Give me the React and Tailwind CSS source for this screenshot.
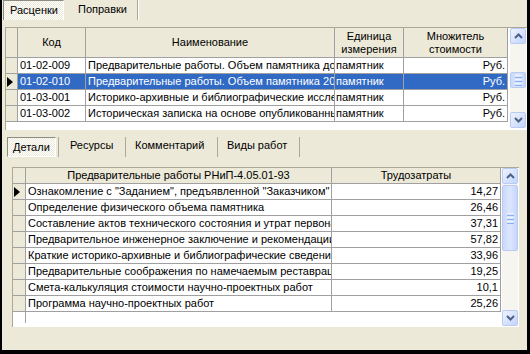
import React from "react";

const FONT = "font-['Liberation_Sans',Arial,sans-serif]";

function Chevron({ up }) {
  return (
    <svg width="9" height="6" viewBox="0 0 9 6">
      <path
        d={up ? "M1 5 L4.5 1.5 L8 5" : "M1 1 L4.5 4.5 L8 1"}
        fill="none"
        stroke="#4D6185"
        strokeWidth="2"
      />
    </svg>
  );
}

function SBtn({ up }) {
  return (
    <div className="h-[16px] w-[16px] shrink-0 rounded-[2px] border border-[#B9CBF3] bg-gradient-to-br from-[#EEF3FE] to-[#C3D5FC] flex items-center justify-center">
      <Chevron up={up} />
    </div>
  );
}

function Grip() {
  return (
    <div className="flex flex-col gap-[1px] items-center">
      <div className="w-[7px] h-[1px] bg-[#EEF4FE]" />
      <div className="w-[7px] h-[1px] bg-[#8CB0F8]" />
      <div className="w-[7px] h-[1px] bg-[#EEF4FE]" />
      <div className="w-[7px] h-[1px] bg-[#8CB0F8]" />
      <div className="w-[7px] h-[1px] bg-[#EEF4FE]" />
      <div className="w-[7px] h-[1px] bg-[#8CB0F8]" />
    </div>
  );
}

function Thumb({ cls }) {
  return (
    <div
      className={`w-[16px] shrink-0 rounded-[2px] border border-[#B9CBF3] bg-gradient-to-r from-[#CAD9FC] via-[#DCE6FD] to-[#C6D6FC] flex items-center justify-center ${cls}`}
    >
      <Grip />
    </div>
  );
}

function Indicator({ arrow }) {
  return (
    <div className="w-[12px] shrink-0 h-full bg-[#ECE9D8] border-r border-b border-[#A0A0A0] flex items-center justify-start pl-[1px]">
      {arrow && (
        <svg width="6" height="10" viewBox="0 0 6 10">
          <path d="M0 0 L6 5 L0 10 Z" fill="#000" />
        </svg>
      )}
    </div>
  );
}

const upperRows = [
  ["01-02-009", "Предварительные работы. Объем памятника до 2000 куб.м", "памятник", "Руб.", false],
  ["01-02-010", "Предварительные работы. Объем памятника 2001-5000 куб.м", "памятник", "Руб.", true],
  ["01-03-001", "Историко-архивные и библиографические исследования", "памятник", "Руб.", false],
  ["01-03-002", "Историческая записка на основе опубликованных материалов", "памятник", "Руб.", false],
];

const lowerRows = [
  ["Ознакомление с \"Заданием\", предъявленной \"Заказчиком\"", "14,27"],
  ["Определение физического объема памятника", "26,46"],
  ["Составление актов технического состояния и утрат первоначальных элементов", "37,31"],
  ["Предварительное инженерное заключение и рекомендации", "57,82"],
  ["Краткие историко-архивные и библиографические сведения", "33,96"],
  ["Предварительные соображения по намечаемым реставрационным работам", "19,25"],
  ["Смета-калькуляция стоимости научно-проектных работ", "10,1"],
  ["Программа научно-проектных работ", "25,26"],
];

const DITHER =
  "[background:repeating-conic-gradient(#ffffff_0%_25%,#ECE9D8_0%_50%)_0_0/2px_2px]";

export default function App() {
  return (
    <div className={`w-[530px] h-[354px] bg-black pl-[2px] pr-[3px] pb-[4px] ${FONT} text-[11px] text-black`}>
      <div className="h-full bg-[#ECE9D8] flex flex-col">
        {/* top tabs */}
        <div className="h-[20px] flex pl-[1px] shrink-0">
          <div className={`w-[61px] h-[20px] border-l border-t border-[#8E8C80] border-r-white border-r ${DITHER} pl-[6px] leading-[19px]`}>
            Расценки
          </div>
          <div className="w-[74px] h-[20px] border-r border-[#ACA899] pl-[14px] leading-[19px] shadow-[1px_0_0_#fff]">
            Поправки
          </div>
        </div>

        {/* upper grid */}
        <div className="mt-[7px] ml-[3px] h-[103px] shrink-0 bg-white border-t border-l border-[#ACA899] flex">
          <div className="w-[502px] shrink-0 flex flex-col">
            {/* header */}
            <div className="h-[30px] flex shrink-0 bg-[#ECE9D8]">
              <Indicator />
              <div className="w-[68px] shrink-0 border-r border-b border-[#A0A0A0] flex items-center justify-center leading-[13px]">Код</div>
              <div className="w-[249px] shrink-0 border-r border-b border-[#A0A0A0] flex items-center justify-center leading-[13px]">Наименование</div>
              <div className="w-[69px] shrink-0 border-r border-b border-[#A0A0A0] flex items-center justify-center text-center leading-[13px]">Единица<br />измерения</div>
              <div className="w-[104px] shrink-0 border-r border-b border-[#A0A0A0] flex items-center justify-center text-center leading-[13px]">Множитель<br />стоимости</div>
            </div>
            {upperRows.map(([code, name, unit, mult, sel], i) => {
              const c = sel ? "bg-[#316AC5] text-white" : "bg-white";
              return (
                <div key={i} className="h-[16px] flex shrink-0">
                  <Indicator arrow={sel} />
                  <div className={`w-[68px] shrink-0 border-r border-b border-[#A0A0A0] overflow-hidden whitespace-nowrap pl-[2px] leading-[15px] ${c}`}>{code}</div>
                  <div className={`w-[249px] shrink-0 border-r border-b border-[#A0A0A0] overflow-hidden whitespace-nowrap pl-[2px] leading-[15px] ${c}`}>{name}</div>
                  <div className={`w-[69px] shrink-0 border-r border-b border-[#A0A0A0] overflow-hidden whitespace-nowrap pl-[1px] leading-[15px] ${c}`}>{unit}</div>
                  <div className={`w-[104px] shrink-0 border-r border-b border-[#A0A0A0] overflow-hidden whitespace-nowrap pr-[2px] text-right leading-[15px] ${c}`}>{mult}</div>
                </div>
              );
            })}
          </div>
          <div className="ml-[2px] w-[16px] h-[100px] shrink-0 bg-[#F6F5F0] flex flex-col">
            <SBtn up />
            <div className="h-[28px] shrink-0" />
            <Thumb cls="h-[16px]" />
            <div className="flex-1" />
            <SBtn />
          </div>
        </div>

        {/* lower tabs */}
        <div className="mt-[7px] h-[20px] flex pl-[5px] shrink-0">
          <div className={`w-[49px] h-[20px] border-l border-t border-[#8E8C80] border-r border-b border-r-white border-b-white ${DITHER} pl-[5px] leading-[18px]`}>
            Детали
          </div>
          <div className="ml-[2px] w-[68px] h-[20px] border-l border-r border-[#ACA899] pl-[11px] leading-[17px]">
            Ресурсы
          </div>
          <div className="w-[92px] h-[20px] border-r border-[#ACA899] pl-[9px] leading-[17px]">
            Комментарий
          </div>
          <div className="w-[82px] h-[20px] border-r border-[#ACA899] pl-[9px] leading-[17px]">
            Виды работ
          </div>
        </div>

        {/* lower grid */}
        <div className="mt-[10px] ml-[10px] w-[507px] h-[160px] shrink-0 bg-white border-t border-l border-[#ACA899] flex">
          <div className="w-[488px] shrink-0 flex flex-col">
            <div className="h-[16px] flex shrink-0 bg-[#ECE9D8]">
              <div className="w-[13px] shrink-0 border-r border-b border-[#A0A0A0]" />
              <div className="w-[306px] shrink-0 border-r border-b border-[#A0A0A0] text-center leading-[15px] overflow-hidden whitespace-nowrap">Предварительные работы РНиП-4.05.01-93</div>
              <div className="w-[169px] shrink-0 border-r border-b border-[#A0A0A0] text-center leading-[15px]">Трудозатраты</div>
            </div>
            {lowerRows.map(([name, v], i) => (
              <div key={i} className="h-[16px] flex shrink-0">
                <div className="w-[13px] shrink-0 bg-[#ECE9D8] border-r border-b border-[#A0A0A0] flex items-center pl-[1px]">
                  {i === 0 && (
                    <svg width="6" height="10" viewBox="0 0 6 10">
                      <path d="M0 0 L6 5 L0 10 Z" fill="#000" />
                    </svg>
                  )}
                </div>
                <div className="w-[306px] shrink-0 border-r border-b border-[#A0A0A0] pl-[2px] leading-[15px] overflow-hidden whitespace-nowrap">{name}</div>
                <div className="w-[169px] shrink-0 border-r border-b border-[#A0A0A0] pr-[2px] text-right leading-[15px]">{v}</div>
              </div>
            ))}
            <div className="h-[11px] w-[13px] border-r border-[#A0A0A0]" />
          </div>
          <div className="ml-[1px] w-[16px] h-[158px] shrink-0 bg-[#F6F5F0] flex flex-col">
            <SBtn up />
            <Thumb cls="h-[66px] mt-[1px]" />
            <div className="flex-1" />
            <SBtn />
          </div>
        </div>
      </div>
    </div>
  );
}
